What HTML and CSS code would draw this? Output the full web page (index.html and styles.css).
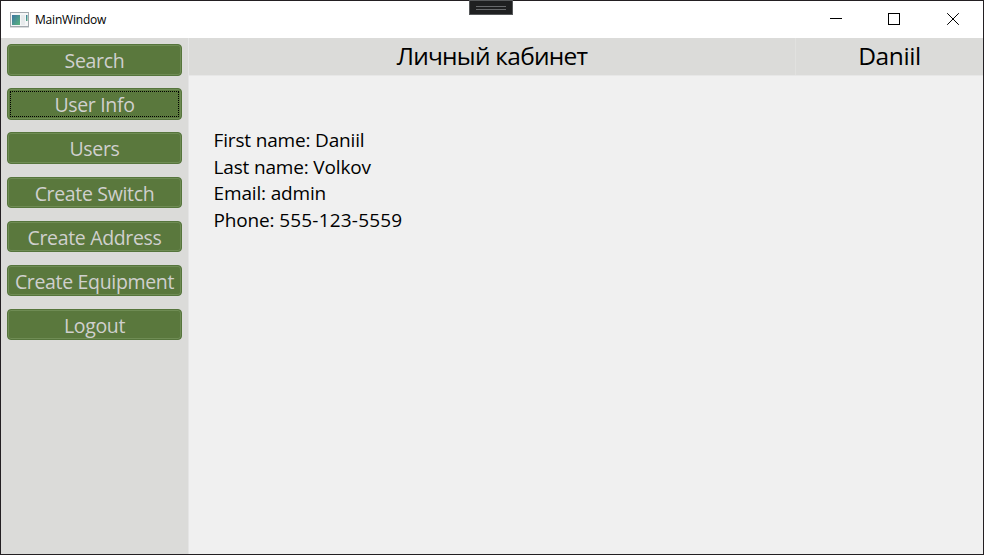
FILE: index.html
```html
<!DOCTYPE html>
<html lang="en">
<head>
<meta charset="utf-8">
<title>MainWindow</title>
<link rel="stylesheet" href="styles.css">
</head>
<body>
<div class="window">
  <header class="titlebar">
    <svg class="app-icon" width="19" height="16" viewBox="0 0 19 16">
      <defs><linearGradient id="g" x1="0" y1="0" x2="1" y2="1"><stop offset="0" stop-color="#3d75a3"/><stop offset="1" stop-color="#59b57c"/></linearGradient></defs>
      <rect x=".5" y=".5" width="18" height="14" fill="#f5f6f7" stroke="#a3a9ae"/>
      <path d="M0 15.5h19" stroke="#d9dbdd"/>
      <rect x="2" y="3" width="8" height="10" fill="url(#g)"/>
      <rect x="11" y="3" width="4" height="10" fill="#e7eaec"/>
      <rect x="16" y="3" width="1.5" height="6" fill="url(#g)"/>
    </svg>
    <span class="caption">MainWindow</span>
    <svg class="controls" width="130" height="12" viewBox="0 0 130 12" fill="none" stroke="#000">
      <path d="M0 5.5h12"/>
      <rect x="58.5" y=".5" width="11" height="11"/>
      <path d="M117.2 .2l11.6 11.6M128.8 .2l-11.6 11.6"/>
    </svg>
    <div class="debug-grip"><i></i></div>
  </header>
  <div class="content">
    <nav class="sidebar">
      <button class="nav-button"><span>Search</span></button>
      <button class="nav-button focused"><span>User Info</span></button>
      <button class="nav-button"><span>Users</span></button>
      <button class="nav-button short first-short"><span>Create Switch</span></button>
      <button class="nav-button short"><span>Create Address</span></button>
      <button class="nav-button short"><span>Create Equipment</span></button>
      <button class="nav-button short"><span>Logout</span></button>
    </nav>
    <main class="page">
      <div class="page-header">
        <div class="page-title">Личный кабинет</div>
        <div class="user-name">Daniil</div>
      </div>
      <div class="details">
        <div>First name: Daniil</div>
        <div>Last name: Volkov</div>
        <div>Email: admin</div>
        <div>Phone: <span class="phone">555-123-5559</span></div>
      </div>
    </main>
  </div>
</div>
</body>
</html>
```
FILE: styles.css
```css
* { box-sizing: border-box; }
body { margin: 0; background: #fff; overflow: hidden; font-family: "Open Sans", "Noto Sans", sans-serif; color: #000; }
.window { width: 984px; height: 555px; border: 1px solid #231f22; background: #f0f0f0; display: flex; flex-direction: column; }
.titlebar { position: relative; height: 37px; flex: none; display: flex; align-items: center; background: #fff; padding: 0 23px 0 9px; }
.app-icon { margin-top: 1px; }
.caption { margin-left: 6px; margin-top: -1px; font-size: 12px; letter-spacing: -.2px; }
.controls { margin-left: auto; margin-top: -1px; }
.debug-grip { position: absolute; left: 468px; top: -1px; width: 44px; height: 15px; background: #1f2021; border: 1px solid #56585a; display: flex; align-items: center; justify-content: center; }
.debug-grip i { width: 30px; height: 4px; border: solid #67696b; border-width: 1px 0; }
.content { flex: 1; display: flex; }
.sidebar { width: 188px; background: #dbdbd9; border-right: 1px solid #e5e5e5; padding: 6px; display: flex; flex-direction: column; gap: 12px; }
.nav-button { width: 175px; height: 32px; flex: none; padding: 0; border: 1px solid #56753c; border-radius: 4px; background: #5a783d; box-shadow: inset 0 0 0 1px #6f8c54; color: #d0d0ce; font: 19.5px/31px "Open Sans", sans-serif; letter-spacing: -.33px; white-space: nowrap; position: relative; }
.nav-button.short { height: 31px; margin-bottom: 1px; }
.first-short { margin-top: 1px; }
.focused::after { content: ""; position: absolute; inset: 2px; border: 1px dotted #000; }
.nav-button span { display: block; height: 30px; }
.page { flex: 1; }
.page-header { height: 38px; display: flex; background: #dbdbd9; border-bottom: 1px solid #e7e7e7; font-size: 24.5px; line-height: 36px; text-align: center; }
.page-title { width: 607px; border-right: 1px solid #e1e1df; letter-spacing: -.75px; }
.user-name { flex: 1; letter-spacing: -.4px; }
.details { padding: 51px 0 0 24.6px; font-size: 19px; line-height: 26.6px; letter-spacing: -.17px; }
.phone { letter-spacing: .2px; }
```
